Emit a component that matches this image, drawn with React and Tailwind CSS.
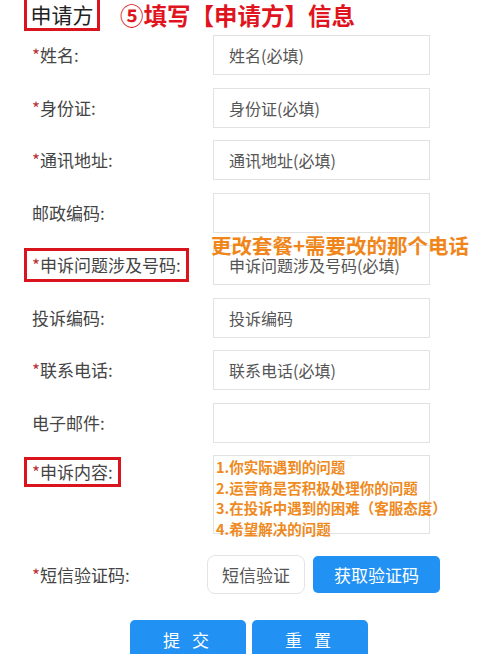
import React from 'react';

const font = { fontFamily: '"Noto Sans CJK SC", "Noto Sans", sans-serif' };

const rows = [
  { label: '姓名:', req: true, ph: '姓名(必填)' },
  { label: '身份证:', req: true, ph: '身份证(必填)' },
  { label: '通讯地址:', req: true, ph: '通讯地址(必填)' },
  { label: '邮政编码:', req: false, ph: '' },
  { label: '申诉问题涉及号码:', req: true, ph: '申诉问题涉及号码(必填)', boxed: true },
  { label: '投诉编码:', req: false, ph: '投诉编码' },
  { label: '联系电话:', req: true, ph: '联系电话(必填)' },
  { label: '电子邮件:', req: false, ph: '' },
];

function Label({ text, req, boxed }) {
  return (
    <div className="w-[181px] shrink-0">
      <span
        className={
          boxed
            ? 'inline-block -ml-[8px] border-[3px] border-[#d9141c] px-[5px] leading-[28px] text-[17px] text-[#444]'
            : 'inline-block text-[17px] leading-[28px] text-[#444]'
        }
      >
        {req && <span className="text-[#b8323a]">*</span>}
        {text}
      </span>
    </div>
  );
}

export default function App() {
  return (
    <div className="relative w-[500px] h-[654px] overflow-hidden bg-white" style={font}>
      {/* header */}
      <div className="flex items-center h-[31px]">
        <div className="ml-[24px] w-[76px] h-[31px] border-[3px] border-t-0 border-[#d9141c] flex items-center justify-center text-[21px] leading-[28px] text-[#222]">
          申请方
        </div>
        <div className="ml-[20px] text-[23.5px] font-bold text-[#e0141e] leading-[31px] whitespace-nowrap">⑤填写【申请方】信息</div>
      </div>

      <div className="flex flex-col gap-[12.5px] mt-[4px]">
        {rows.map((r) => (
          <div key={r.label} className="flex items-center pl-[32px] h-[40px]">
            <Label text={r.label} req={r.req} boxed={r.boxed} />
            <div className="w-[217px] h-[40px] border border-[#e2e2e2] flex items-center px-[15px] text-[16px] text-[#555]">
              {r.ph}
            </div>
          </div>
        ))}

        <div className="flex items-start pl-[32px] h-[79px]">
          <div className="w-[181px] shrink-0 pt-[2px]">
            <span className="inline-block -ml-[8px] border-[3px] border-[#d9141c] px-[5px] leading-[24px] text-[17px] text-[#444]">
              <span className="text-[#b8323a]">*</span>申诉内容:
            </span>
          </div>
          <div className="w-[217px] h-[79px] border border-[#e2e2e2] pl-[2px] pt-[1px] text-[14.5px] font-bold leading-[20.5px] text-[#ee8a1e] whitespace-nowrap">
            <div>1.你实际遇到的问题</div>
            <div>2.运营商是否积极处理你的问题</div>
            <div>3.在投诉中遇到的困难（客服态度）</div>
            <div>4.希望解决的问题</div>
          </div>
        </div>
      </div>

      {/* sms */}
      <div className="flex items-center pl-[32px] mt-[21px] h-[39px]">
        <div className="w-[175px] shrink-0 text-[17px] text-[#444]">
          <span className="text-[#b8323a]">*</span>短信验证码:
        </div>
        <div className="w-[98px] h-[39px] border border-[#e4e4e4] rounded-[8px] flex items-center justify-center text-[17px] text-[#555]">
          短信验证
        </div>
        <button className="ml-[8px] w-[127px] h-[37px] rounded-[5px] bg-[#2191f3] text-white text-[17px]">获取验证码</button>
      </div>

      {/* actions */}
      <div className="flex justify-center gap-[6px] mt-[26px] -ml-[2px]">
        <button className="w-[116px] h-[40px] rounded-[5px] bg-[#2191f3] text-white text-[17px] tracking-[4px]">提 交</button>
        <button className="w-[116px] h-[40px] rounded-[5px] bg-[#2191f3] text-white text-[17px] tracking-[4px]">重 置</button>
      </div>

      {/* annotation */}
      <div className="absolute left-[211px] top-[231px] text-[20.5px] font-bold leading-[28px] text-[#f0861a] whitespace-nowrap">
        更改套餐+需要改的那个电话
      </div>
    </div>
  );
}
